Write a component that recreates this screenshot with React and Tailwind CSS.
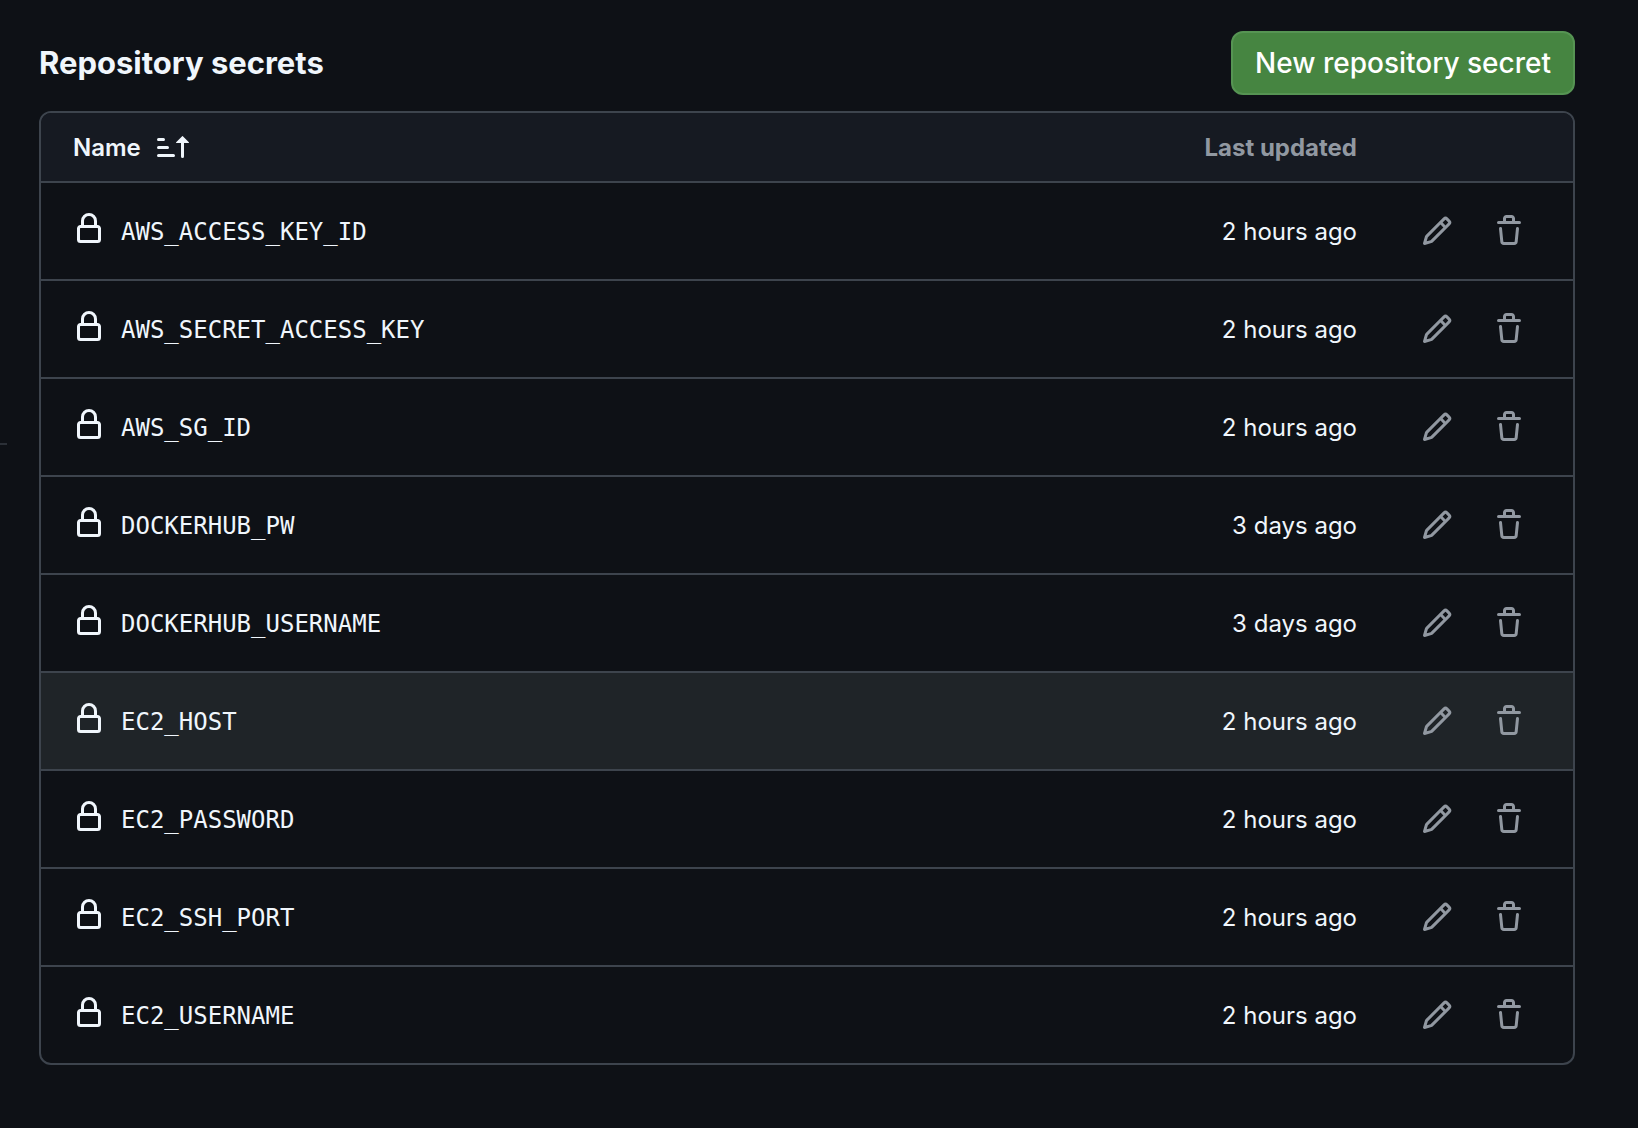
import clsx from "clsx";

const secrets = [
  { name: "AWS_ACCESS_KEY_ID", updated: "2 hours ago" },
  { name: "AWS_SECRET_ACCESS_KEY", updated: "2 hours ago" },
  { name: "AWS_SG_ID", updated: "2 hours ago" },
  { name: "DOCKERHUB_PW", updated: "3 days ago" },
  { name: "DOCKERHUB_USERNAME", updated: "3 days ago" },
  { name: "EC2_HOST", updated: "2 hours ago", active: true },
  { name: "EC2_PASSWORD", updated: "2 hours ago" },
  { name: "EC2_SSH_PORT", updated: "2 hours ago" },
  { name: "EC2_USERNAME", updated: "2 hours ago" },
];

const icons = {
  lock: "M4 4a4 4 0 0 1 8 0v2h.25c.966 0 1.75.784 1.75 1.75v5.5A1.75 1.75 0 0 1 12.25 15h-8.5A1.75 1.75 0 0 1 2 13.25v-5.5C2 6.784 2.784 6 3.75 6H4Zm8.25 3.5h-8.5a.25.25 0 0 0-.25.25v5.5c0 .138.112.25.25.25h8.5a.25.25 0 0 0 .25-.25v-5.5a.25.25 0 0 0-.25-.25ZM10.5 6V4a2.5 2.5 0 1 0-5 0v2Z",
  pencil:
    "M11.013 1.427a1.75 1.75 0 0 1 2.474 0l1.086 1.086a1.75 1.75 0 0 1 0 2.474l-8.61 8.61c-.21.21-.47.364-.756.445l-3.251.93a.75.75 0 0 1-.927-.928l.929-3.25c.081-.286.235-.547.445-.758l8.61-8.61Zm.176 4.823L9.75 4.81l-6.286 6.287a.253.253 0 0 0-.064.108l-.558 1.953 1.953-.558a.253.253 0 0 0 .108-.064Zm1.238-3.763a.25.25 0 0 0-.354 0L10.811 3.75l1.439 1.44 1.263-1.263a.25.25 0 0 0 0-.354Z",
  trash:
    "M11 1.75V3h2.25a.75.75 0 0 1 0 1.5H2.75a.75.75 0 0 1 0-1.5H5V1.75C5 .784 5.784 0 6.75 0h2.5C10.216 0 11 .784 11 1.75ZM4.496 6.675l.66 6.6a.25.25 0 0 0 .249.225h5.19a.25.25 0 0 0 .249-.225l.66-6.6a.75.75 0 0 1 1.492.149l-.66 6.6A1.748 1.748 0 0 1 10.595 15h-5.19a1.75 1.75 0 0 1-1.741-1.575l-.66-6.6a.75.75 0 1 1 1.492-.15ZM6.5 1.75V3h3V1.75a.25.25 0 0 0-.25-.25h-2.5a.25.25 0 0 0-.25.25Z",
  sortAsc:
    "m12.927 2.573 3 3A.25.25 0 0 1 15.75 6H13.5v6.75a.75.75 0 0 1-1.5 0V6H9.75a.25.25 0 0 1-.177-.427l3-3a.25.25 0 0 1 .354 0ZM0 12.25a.75.75 0 0 1 .75-.75h7.5a.75.75 0 0 1 0 1.5H.75a.75.75 0 0 1-.75-.75Zm0-4a.75.75 0 0 1 .75-.75h4.5a.75.75 0 0 1 0 1.5H.75a.75.75 0 0 1-.75-.75Zm0-4a.75.75 0 0 1 .75-.75h2.5a.75.75 0 0 1 0 1.5H.75a.75.75 0 0 1-.75-.75Z",
};

function Icon({ name }) {
  return (
    <svg
      viewBox="0 0 16 16"
      fill="currentColor"
      aria-hidden="true"
      className="size-8 shrink-0"
    >
      <path d={icons[name]} />
    </svg>
  );
}

function IconButton({ icon, label }) {
  return (
    <button
      type="button"
      aria-label={label}
      className="rounded-xl p-4 text-[#9198a1] hover:bg-[#1f2428]"
    >
      <Icon name={icon} />
    </button>
  );
}

function SecretRow({ secret }) {
  return (
    <tr className={clsx(secret.active && "bg-[#1f2428]")}>
      <td className="border-t-2 border-[#3d444d] pt-0.5 pl-8">
        <div className="flex items-start gap-4">
          <Icon name="lock" />
          <code className="font-['DejaVu_Sans_Mono',monospace] text-2xl leading-[38px]">
            {secret.name}
          </code>
        </div>
      </td>
      <td className="border-t-2 border-[#3d444d] px-6 pt-0.5 text-right text-2xl leading-9 whitespace-nowrap">
        {secret.updated}
      </td>
      <td className="w-px border-t-2 border-[#3d444d] py-4 pr-8 pl-6">
        <div className="flex gap-2">
          <IconButton icon="pencil" label={`Edit ${secret.name}`} />
          <IconButton icon="trash" label={`Delete ${secret.name}`} />
        </div>
      </td>
    </tr>
  );
}

export default function App() {
  return (
    <div className="flex min-h-screen bg-[#0e1116] font-['Inter',sans-serif] text-[#f0f6fc]">
      {/* End of the sidebar divider */}
      <aside className="w-[39px] shrink-0 pt-[443px]">
        <hr className="w-[7px] border-t-2 border-[#2b3037]" />
      </aside>

      <main className="min-w-0 flex-1 pt-[31px] pr-[63px] pb-16">
        <div className="mb-4 flex items-center justify-between">
          <h2 className="text-[31px] leading-10 font-bold">
            Repository secrets
          </h2>
          <button
            type="button"
            className="h-16 rounded-xl border-2 border-[#569453] bg-[#468541] px-[22px] text-[28px] font-medium text-white"
          >
            New repository secret
          </button>
        </div>

        <div className="overflow-hidden rounded-xl border-2 border-[#3d444d]">
          <table className="w-full border-separate border-spacing-0">
            <thead className="bg-[#161a22]">
              <tr className="text-2xl leading-9">
                <th scope="col" className="py-4 pl-8 text-left font-semibold">
                  <button type="button" className="flex items-center gap-4">
                    <span className="pt-0.5 leading-[34px]">Name</span>
                    <Icon name="sortAsc" />
                  </button>
                </th>
                <th
                  scope="col"
                  className="px-6 pt-0.5 text-right font-bold whitespace-nowrap text-[#9198a1]"
                >
                  Last updated
                </th>
                <th scope="col" aria-label="Actions" />
              </tr>
            </thead>
            <tbody>
              {secrets.map((secret) => (
                <SecretRow key={secret.name} secret={secret} />
              ))}
            </tbody>
          </table>
        </div>
      </main>
    </div>
  );
}
